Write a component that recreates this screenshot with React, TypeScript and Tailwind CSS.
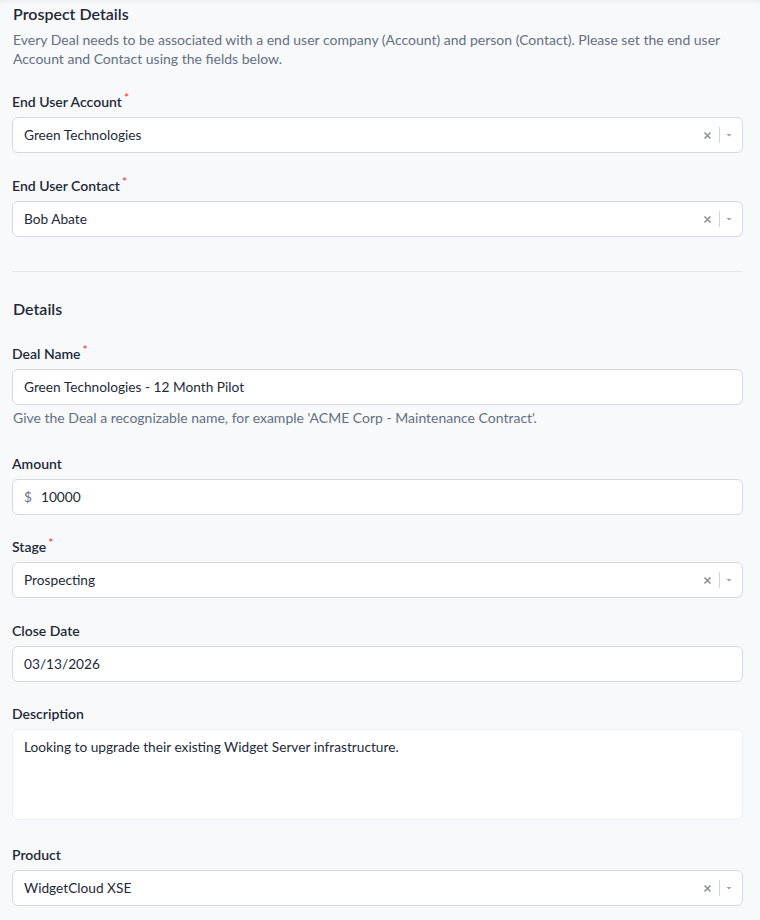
import React from "react";

function Label({ text, required }: { text: string; required?: boolean }) {
  return (
    <div className="flex items-start text-[14px] font-semibold text-[#1f2937] leading-5 mb-[5px]">
      <span>{text}</span>
      {required && <span className="text-[#ef4444] text-[12px] leading-3 ml-[2px]">*</span>}
    </div>
  );
}

function Select({ value }: { value: string }) {
  return (
    <div className="h-9 bg-white border border-[#d5d9e0] rounded-md flex items-center pl-[11px] pr-2 text-[13.7px] text-[#1f2937]">
      <span className="flex-1">{value}</span>
      <svg width="9" height="9" viewBox="0 0 9 9" className="mr-[7px]">
        <path d="M1.5 1.5 L7.5 7.5 M7.5 1.5 L1.5 7.5" stroke="#8a8f98" strokeWidth="1.6" />
      </svg>
      <span className="w-px h-4 bg-[#d1d5db] mr-[5px]" />
      <svg width="8" height="5" viewBox="0 0 8 5" className="mr-[1px]">
        <path d="M1.5 1 L6.5 1 L4 3.5 Z" fill="#9ca3af" />
      </svg>
    </div>
  );
}

function Input({ value, prefix }: { value: string; prefix?: string }) {
  return (
    <div className="h-9 bg-white border border-[#d5d9e0] rounded-md flex items-center px-[11px] text-[13.7px] text-[#1f2937]">
      {prefix && <span className="text-[#6b7280] mr-[9px]">{prefix}</span>}
      <span>{value}</span>
    </div>
  );
}

export default function App() {
  return (
    <div
      className="min-h-[920px] bg-[#f8f9fb] pl-3 pr-[17px] pt-[2px] shadow-[inset_0_4px_4px_-2px_rgba(0,0,0,0.05)]"
      style={{ fontFamily: "Lato, 'Noto Sans', sans-serif" }}
    >
      <h2 className="text-[16px] font-semibold text-[#1f2937] leading-6 pl-px">Prospect Details</h2>
      <p className="text-[14px] text-[#64707f] leading-[19px] mt-[4px] pl-px">
        Every Deal needs to be associated with a end user company (Account) and person (Contact). Please set the end user
        Account and Contact using the fields below.
      </p>

      <div className="mt-[24px]">
        <Label text="End User Account" required />
        <Select value="Green Technologies" />
      </div>
      <div className="mt-[23px]">
        <Label text="End User Contact" required />
        <Select value="Bob Abate" />
      </div>

      <div className="h-px bg-[#e3e6ea] mt-[34px] mr-px" />

      <h2 className="text-[16px] font-semibold text-[#1f2937] leading-6 pl-px mt-[25px]">Details</h2>

      <div className="mt-[23px]">
        <Label text="Deal Name" required />
        <Input value="Green Technologies - 12 Month Pilot" />
        <p className="text-[14px] text-[#64707f] leading-5 mt-[3px] pl-px">
          Give the Deal a recognizable name, for example 'ACME Corp - Maintenance Contract'.
        </p>
      </div>
      <div className="mt-[26px]">
        <Label text="Amount" />
        <Input value="10000" prefix="$" />
      </div>
      <div className="mt-[22px]">
        <Label text="Stage" required />
        <Select value="Prospecting" />
      </div>
      <div className="mt-[23px]">
        <Label text="Close Date" />
        <Input value="03/13/2026" />
      </div>
      <div className="mt-[22px]">
        <Label text="Description" />
        <div className="h-[91px] bg-white border border-[#eef0f3] rounded-md px-[11px] pt-[7px] text-[13.7px] text-[#1f2937]">
          Looking to upgrade their existing Widget Server infrastructure.
        </div>
      </div>
      <div className="mt-[25px]">
        <Label text="Product" />
        <Select value="WidgetCloud XSE" />
      </div>
    </div>
  );
}
